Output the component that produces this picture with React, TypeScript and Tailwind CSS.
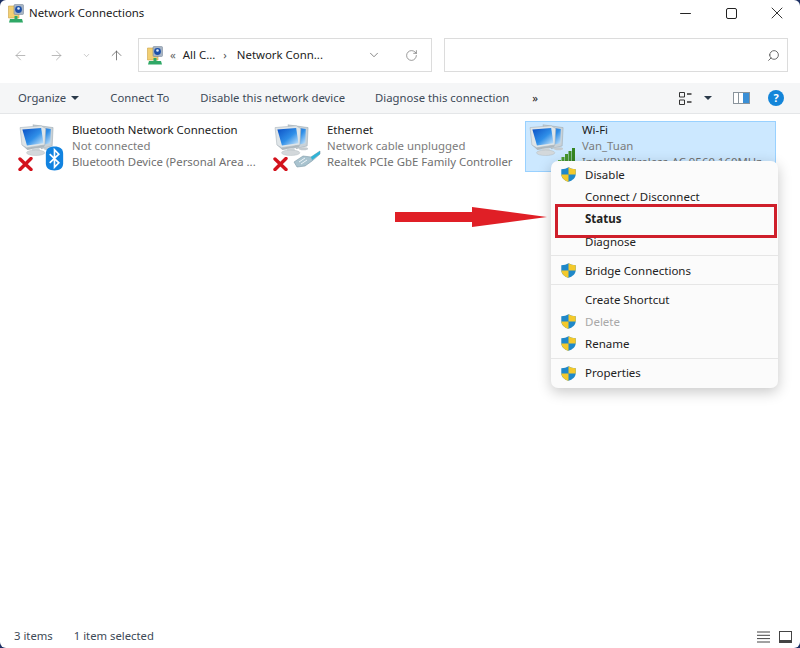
import { ArrowLeft, ArrowRight, ArrowUp, ChevronDown, RotateCw, Search, Minus, X } from "lucide-react";

function Computers() {
  return (
    <svg width="37" height="33" viewBox="0 0 40 36" className="shrink-0">
      <defs>
        <linearGradient id="scr" x1="0" y1="0" x2="1" y2="1">
          <stop offset="0" stopColor="#0b4fc4" />
          <stop offset="0.55" stopColor="#2f8fe8" />
          <stop offset="1" stopColor="#d5ecfb" />
        </linearGradient>
      </defs>
      <path d="M15 2 L37 5 L36 25 L24 28 Z" fill="#c9d2d8" stroke="#9aa7af" strokeWidth="0.6" />
      <path d="M18 4 L34.5 6.5 L34 22 L25 24 Z" fill="url(#scr)" />
      <ellipse cx="32" cy="28" rx="5" ry="1.6" fill="#c5cbcf" />
      <path d="M1 5 L24 3 L29 6 L28 24 L8 27 L3 24 Z" fill="#dfe5e8" stroke="#a5b0b7" strokeWidth="0.6" />
      <path d="M3.5 7 L24 5.5 L26.5 22 L8.5 24.5 Z" fill="url(#scr)" />
      <path d="M3 24 L8 27 L28 24 L27 26.5 L9 29.5 Z" fill="#aeb8be" />
      <path d="M14 28 L22 27 L23 31 L14 32 Z" fill="#cfd6da" />
      <ellipse cx="18" cy="32.5" rx="10" ry="3" fill="#d3d8db" stroke="#b3bbc0" strokeWidth="0.5" />
    </svg>
  );
}

function RedX() {
  return (
    <svg width="15" height="14" viewBox="0 0 15 14">
      <path d="M2 2 L13 12.5 M13 1.5 L2 12.5" stroke="#d3121c" strokeWidth="3.4" strokeLinecap="round" />
    </svg>
  );
}

function BluetoothBadge() {
  return (
    <svg width="19" height="25" viewBox="0 0 19 26">
      <path d="M9.5 0.5 C15 0.5 18.5 3 18.5 8 L18.5 18 C18.5 23 15 25.5 9.5 25.5 C4 25.5 0.5 23 0.5 18 L0.5 8 C0.5 3 4 0.5 9.5 0.5 Z" fill="#1283e0" />
      <path d="M4.5 8.5 L14 17.5 L9.5 22 L9.5 4 L14 8.5 L4.5 17.5" fill="none" stroke="#fff" strokeWidth="1.7" />
    </svg>
  );
}

function Cable() {
  return (
    <svg width="28" height="18" viewBox="0 0 28 18">
      <path d="M1 12 L10 6 L18 7 L27 1 L27 4 L19 11 L12 16 L4 17 Z" fill="#a9c3cf" stroke="#7c98a6" strokeWidth="0.6" />
      <path d="M18 7 L27 1 L27 4 L19 10 Z" fill="#2fb3d6" />
      <path d="M6 12 L12 8 M8 14 L14 10" stroke="#eef5f8" strokeWidth="1" />
    </svg>
  );
}

function SignalBars() {
  return (
    <svg width="17" height="17" viewBox="0 0 17 17">
      <rect x="0" y="12" width="3" height="5" fill="#5aa83c" />
      <rect x="3.5" y="9" width="3" height="8" fill="#4e9e33" />
      <rect x="7" y="6" width="3" height="11" fill="#46962c" />
      <rect x="10.5" y="3" width="3" height="14" fill="#3f8e27" />
      <rect x="14" y="0" width="3" height="17" fill="#358522" />
    </svg>
  );
}

function Shield() {
  return (
    <svg width="15" height="15" viewBox="0 0 15 15" className="shrink-0">
      <path d="M7.5 0.3 C9.5 1.6 12 2.2 14.7 2.2 L14.7 7 C14.7 11 11.5 13.6 7.5 14.8 C3.5 13.6 0.3 11 0.3 7 L0.3 2.2 C3 2.2 5.5 1.6 7.5 0.3 Z" fill="#1f88c9" />
      <path d="M7.5 0.3 C9.5 1.6 12 2.2 14.7 2.2 L14.7 7.4 L7.5 7.4 Z" fill="#f4c92b" />
      <path d="M7.5 7.4 L0.3 7.4 C0.6 11 3.5 13.6 7.5 14.8 Z" fill="#f4c92b" />
    </svg>
  );
}

function FolderNet() {
  return (
    <svg width="16" height="19" viewBox="0 0 16 19">
      <path d="M0.5 2 L11 2 L11 14 L0.5 14 Z" fill="#f2cf72" stroke="#c9a346" strokeWidth="0.6" />
      <rect x="6" y="0.5" width="9.5" height="10" rx="1" fill="#a7b4c4" stroke="#6d7c8e" strokeWidth="0.5" />
      <circle cx="10.5" cy="5.5" r="3.4" fill="#1c4fa8" />
      <circle cx="10.5" cy="4.5" r="1.3" fill="#dfeaf5" />
      <path d="M2 15 L14 15 L15 18.5 L1 18.5 Z" fill="#2fa866" />
      <rect x="6.5" y="12" width="3" height="3" fill="#2fa866" />
    </svg>
  );
}

function Caret({ className = "" }: { className?: string }) {
  return <span className={`inline-block w-0 h-0 border-x-[4px] border-x-transparent border-t-[4px] border-t-[#2b3a4a] ${className}`} />;
}

function Connection({ name, line2, line3, badge, selected }: { name: string; line2: string; line3: string; badge: React.ReactNode; selected?: boolean }) {
  return (
    <div className={`flex h-[51px] pl-[3px] border ${selected ? "w-[251px] bg-[#cce8ff] border-[#99d1ff]" : "w-[255px] border-transparent"}`}>
      <div className="relative w-[53px] shrink-0 pt-[1px]">
        <Computers />
        {badge}
      </div>
      <div className="min-w-0 text-[11.4px] leading-[16px] whitespace-nowrap">
        <div className="text-[#1a1a1a]">{name}</div>
        <div className="text-[#7b7b7b]">{line2}</div>
        <div className="text-[#6f6f6f]">{line3}</div>
      </div>
    </div>
  );
}

function MenuItem({ label, shield, bold, disabled }: { label: string; shield?: boolean; bold?: boolean; disabled?: boolean }) {
  return (
    <div className={`flex items-center h-[22.2px] text-[11.5px] ${disabled ? "text-[#a8a8a8]" : "text-[#222]"} ${bold ? "font-bold" : ""}`}>
      <span className="w-[34px] flex pl-[10px] shrink-0">{shield && <Shield />}</span>
      <span>{label}</span>
    </div>
  );
}

function Sep() {
  return <div className="my-[3px] h-px bg-[#e6e6e6]" />;
}

export default function App() {
  return (
    <div className="h-[648px] w-[800px] bg-[#1c2f63] overflow-hidden" style={{ fontFamily: "'Noto Sans', sans-serif" }}>
      <div className="relative flex h-full flex-col rounded-[6px] bg-white">
        {/* title bar */}
        <div className="flex h-[26px] shrink-0 items-center pl-[8px]">
          <FolderNet />
          <span className="ml-[5px] text-[11.4px] text-[#1a1a1a]">Network Connections</span>
          <div className="ml-auto flex items-center text-[#222] pr-[13px]">
            <Minus size={17} strokeWidth={1.4} />
            <span className="ml-[32px] h-[11px] w-[11px] rounded-[2px] border border-[#222]" />
            <X size={20} strokeWidth={1.1} className="ml-[30px]" />
          </div>
        </div>
        {/* nav */}
        <div className="mt-[12px] flex h-[34px] shrink-0 items-center">
          <ArrowLeft size={15} strokeWidth={1.2} className="ml-[13px] text-[#a3a3a3]" />
          <ArrowRight size={15} strokeWidth={1.2} className="ml-[21px] text-[#a3a3a3]" />
          <ChevronDown size={9} strokeWidth={1.5} className="ml-[18px] text-[#a3a3a3]" />
          <ArrowUp size={15} strokeWidth={1.2} className="ml-[18px] text-[#555]" />
          <div className="ml-[14px] flex h-[34px] w-[294px] items-center border border-[#dcdcdc] pl-[8px] text-[11.4px] text-[#222]">
            <FolderNet />
            <span className="ml-[7px] text-[#666]">«</span>
            <span className="ml-[7px]">All C...</span>
            <span className="ml-[8px] text-[#555]">›</span>
            <span className="ml-[10px]">Network Conn...</span>
            <ChevronDown size={14} strokeWidth={1.2} className="ml-[44px] text-[#555]" />
            <RotateCw size={13} strokeWidth={1.2} className="ml-[24px] text-[#666]" />
          </div>
          <div className="ml-[12px] flex h-[34px] w-[344px] items-center justify-end border border-[#dcdcdc] pr-[7px]">
            <Search size={13} strokeWidth={1.6} className="-scale-x-100 text-[#555]" />
          </div>
        </div>
        {/* toolbar */}
        <div className="mt-[11px] flex h-[31px] shrink-0 items-center border-b border-[#e4e6e8] bg-[#f5f6f7] pl-[18px] text-[11.3px] text-[#3d4a57]">
          <span>Organize</span>
          <Caret className="ml-[5px]" />
          <span className="ml-[31px]">Connect To</span>
          <span className="ml-[31px]">Disable this network device</span>
          <span className="ml-[30px]">Diagnose this connection</span>
          <span className="ml-[23px] text-[#222]">»</span>
          <svg width="13" height="13" viewBox="0 0 13 13" className="ml-auto">
            <path d="M0.5 0.5 H5.5 V5 H0.5 Z M0.5 8 H5.5 V12.5 H0.5 Z" fill="none" stroke="#333" />
            <path d="M8 2 H12.5 M8 10 H12.5" stroke="#333" strokeWidth="1.4" />
          </svg>
          <Caret className="ml-[12px]" />
          <svg width="17" height="12" viewBox="0 0 17 12" className="ml-[21px]">
            <rect x="0.5" y="0.5" width="16" height="11" fill="#fff" stroke="#8a949c" />
            <rect x="10" y="1" width="6" height="10" fill="#3a8fd6" />
            <rect x="5" y="1" width="1" height="10" fill="#8a949c" />
          </svg>
          <span className="ml-[18px] mr-[16px] flex h-[16px] w-[16px] items-center justify-center rounded-full bg-[#1385d9] text-[11px] font-bold text-white">?</span>
        </div>
        {/* items */}
        <div className="flex flex-1 items-start pl-[15px] pt-[7px]">
          <Connection
            name="Bluetooth Network Connection"
            line2="Not connected"
            line3="Bluetooth Device (Personal Area ..."
            badge={
              <>
                <span className="absolute left-[-1px] top-[35px]"><RedX /></span>
                <span className="absolute left-[26px] top-[24px]"><BluetoothBadge /></span>
              </>
            }
          />
          <Connection
            name="Ethernet"
            line2="Network cable unplugged"
            line3="Realtek PCIe GbE Family Controller"
            badge={
              <>
                <span className="absolute left-[-1px] top-[35px]"><RedX /></span>
                <span className="absolute left-[19px] top-[28px]"><Cable /></span>
              </>
            }
          />
          <Connection
            selected
            name="Wi-Fi"
            line2="Van_Tuan"
            line3="Intel(R) Wireless-AC 9560 160MHz"
            badge={<span className="absolute left-[29px] top-[26px]"><SignalBars /></span>}
          />
        </div>
        {/* status bar */}
        <div className="flex h-[24px] shrink-0 items-center pl-[14px] pr-[8px] pt-[1px] text-[11.3px] text-[#3d4a57]">
          <span>3 items</span>
          <span className="ml-[21px]">1 item selected</span>
          <svg width="13" height="12" viewBox="0 0 13 12" className="ml-auto">
            <path d="M0 1 H13 M0 4.3 H13 M0 7.6 H13 M0 11 H13" stroke="#444" />
          </svg>
          <svg width="13" height="12" viewBox="0 0 13 12" className="ml-[9px]">
            <rect x="0.5" y="0.5" width="12" height="9" fill="#fff" stroke="#444" />
            <rect x="0" y="10" width="13" height="2" fill="#444" />
          </svg>
        </div>
        {/* context menu */}
        <div className="absolute left-[551px] top-[161px] w-[227px] rounded-[7px] bg-[#fbfbfb] pt-[2.5px] pb-[4px] shadow-[0_4px_14px_rgba(0,0,0,0.22)]">
          <MenuItem shield label="Disable" />
          <MenuItem label="Connect / Disconnect" />
          <MenuItem bold label="Status" />
          <MenuItem label="Diagnose" />
          <Sep />
          <MenuItem shield label="Bridge Connections" />
          <Sep />
          <MenuItem label="Create Shortcut" />
          <MenuItem shield disabled label="Delete" />
          <MenuItem shield label="Rename" />
          <Sep />
          <MenuItem shield label="Properties" />
        </div>
        {/* red highlight box and arrow */}
        <div className="absolute left-[555px] top-[204px] h-[34px] w-[222px] border-[3px] border-[#cf1f2b]" />
        <svg width="152" height="21" viewBox="0 0 152 21" className="absolute left-[395px] top-[207px]">
          <path d="M0 5 H77 V0 L152 10 L77 20 V15 H0 Z" fill="#e01f26" />
        </svg>
      </div>
    </div>
  );
}
